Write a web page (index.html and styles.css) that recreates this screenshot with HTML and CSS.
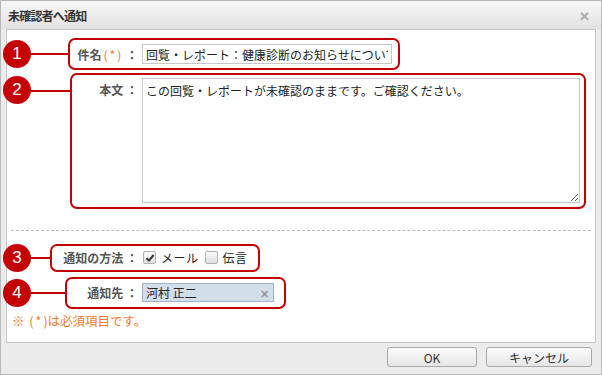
FILE: index.html
```html
<!DOCTYPE html>
<html lang="ja">
<head>
    <meta charset="UTF-8">
    <title>未確認者へ通知</title>
    <link rel="stylesheet" href="styles.css">
</head>
<body>
    <div class="dialog">
        <div class="dialog-head">
            <span class="dialog-title">未確認者へ通知</span>
            <span class="dialog-close">✕</span>
        </div>
        <div class="dialog-body">
            <div class="row row1">
                <span class="num">1</span>
                <span class="lead"></span>
                <div class="callout">
                    <label class="label">件名<span class="req">(*)</span> ：</label>
                    <input class="subject" type="text" value="回覧・レポート：健康診断のお知らせについて">
                </div>
            </div>
            <div class="row row2">
                <span class="num">2</span>
                <span class="lead"></span>
                <div class="callout">
                    <label class="label">本文 ：</label>
                    <textarea class="message">この回覧・レポートが未確認のままです。ご確認ください。</textarea>
                </div>
            </div>
            <hr class="sep">
            <div class="row row3">
                <span class="num">3</span>
                <span class="lead"></span>
                <div class="callout">
                    <label class="label">通知の方法 ：</label>
                    <span class="check checked">
                        <svg width="10" height="10" viewBox="0 0 10 10"><path d="M1.5 5.2 L4 7.6 L8.6 2" fill="none" stroke="#333" stroke-width="2"/></svg>
                    </span>
                    <span class="opt">メール</span>
                    <span class="check"></span>
                    <span class="opt">伝言</span>
                </div>
            </div>
            <div class="row row4">
                <span class="num">4</span>
                <span class="lead"></span>
                <div class="callout">
                    <label class="label">通知先 ：</label>
                    <div class="token">
                        <span>河村 正二</span>
                        <span class="token-x">✕</span>
                    </div>
                </div>
            </div>
            <p class="note">※ <span class="req-mark">(*</span>)は必須項目です。</p>
        </div>
        <div class="dialog-foot">
            <button type="button" class="btn btn-ok">OK</button>
            <button type="button" class="btn btn-cancel">キャンセル</button>
        </div>
    </div>
</body>
</html>
```

FILE: styles.css
```css
body {
    margin: 0;
    font-family: "Noto Sans CJK JP", "Liberation Sans", sans-serif;
    font-size: 12px;
    color: #222;
    background: #fff;
}
.dialog {
    width: 602px;
    height: 375px;
    box-sizing: border-box;
    border: 1px solid #b8b8b8;
    background: #ececec;
    display: flex;
    flex-direction: column;
}
.dialog-head {
    height: 28px;
    display: flex;
    align-items: center;
    justify-content: space-between;
    padding: 0 11px 0 7px;
    background: linear-gradient(#f8f8f8, #e2e2e2);
}
.dialog-title {
    font-weight: bold;
    font-size: 12px;
    color: #333;
    letter-spacing: -0.8px;
}
.dialog-close {
    color: #aaa;
    font-size: 13px;
    font-weight: bold;
}
.dialog-body {
    margin: 0 5px;
    height: 314px;
    box-sizing: border-box;
    border: 1px solid #c8c8c8;
    background: #fff;
    padding-top: 8px;
}
.row {
    display: flex;
    align-items: center;
}
.num {
    width: 28px;
    height: 28px;
    margin-left: -4px;
    border-radius: 50%;
    background: #c40000;
    color: #fff;
    font-family: "Liberation Sans", sans-serif;
    font-size: 17px;
    line-height: 28px;
    text-align: center;
    flex: none;
}
.lead {
    height: 2px;
    background: #c40000;
    flex: none;
}
.callout {
    display: flex;
    align-items: center;
    border: 2px solid #c40000;
    border-radius: 7px;
    padding: 4px 6px 4px 2px;
}
.label {
    font-weight: bold;
    color: #555;
    text-align: right;
    margin-right: 4px;
    white-space: nowrap;
    flex: none;
}
.req {
    color: #f07a2a;
    font-weight: normal;
    letter-spacing: 2px;
    margin-left: 2px;
}
.row1 .lead { width: 37px; }
.row1 .label { width: 66px; }
.subject {
    width: 250px;
    height: 20px;
    box-sizing: border-box;
    border: 1px solid #c8c8c8;
    padding: 0 3px;
    font: inherit;
    color: #222;
}
.row2 {
    align-items: flex-start;
    margin-top: 3px;
}
.row2 .num { margin-top: 3px; }
.row2 .lead { width: 39px; margin-top: 17px; }
.row2 .callout {
    align-items: flex-start;
    padding: 3px 4px 4px 2px;
}
.row2 .label { width: 64px; margin-top: 3px; }
.message {
    width: 438px;
    height: 125px;
    box-sizing: border-box;
    border: 1px solid #c8c8c8;
    padding: 3px;
    font: inherit;
    color: #222;
    margin: 0;
}
.sep {
    border: none;
    border-top: 1px dashed #bbb;
    margin: 21px 4px 13px;
}
.row3 .lead { width: 19px; }
.row3 .callout { padding: 3px 5px 4px 2px; }
.row3 .label { width: 84px; }
.check {
    width: 11px;
    height: 11px;
    border: 1px solid #b0b0b0;
    border-radius: 2px;
    background: linear-gradient(#fafafa, #e0e0e0);
    display: inline-flex;
    align-items: center;
    justify-content: center;
    margin-left: 1px;
}
.opt {
    margin: 0 5px 0 5px;
    letter-spacing: 0.5px;
}
.row4 { margin-top: 5px; }
.row4 .lead { width: 34px; }
.row4 .callout { padding: 4px 10px 5px 2px; }
.row4 .label { width: 69px; }
.token {
    width: 132px;
    height: 19px;
    box-sizing: border-box;
    border: 1px solid #9fb4c8;
    background: #d3dfe8;
    display: flex;
    align-items: center;
    justify-content: space-between;
    padding: 0 4px 0 3px;
}
.token-x {
    color: #999;
    font-size: 11px;
    font-weight: bold;
}
.note {
    margin: 5px 0 0 5px;
    color: #f07a2a;
    line-height: 14px;
    font-size: 12.5px;
}
.req-mark {
    letter-spacing: 2px;
    margin-left: 2px;
}
.dialog-foot {
    flex: 1;
    display: flex;
    justify-content: flex-end;
    align-items: flex-start;
    gap: 9px;
    padding: 4px 9px 0 0;
}
.btn {
    height: 20px;
    border: 1px solid #aaa;
    border-radius: 3px;
    background: linear-gradient(#fbfbfb, #e6e6e6);
    font-family: "Noto Sans CJK JP", "Liberation Sans", sans-serif;
    font-size: 12px;
    color: #333;
    padding: 0;
}
.btn-ok { width: 90px; }
.btn-cancel { width: 106px; }
```
